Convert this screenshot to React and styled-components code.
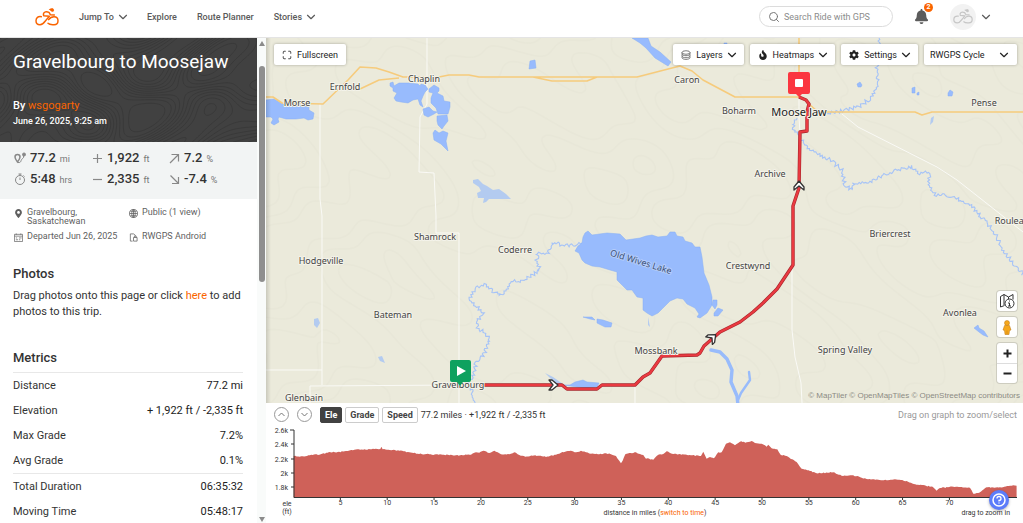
import React, { useState } from "react";
import styled, { createGlobalStyle } from "styled-components";
import { FiChevronDown, FiSearch, FiMaximize } from "react-icons/fi";
import { FaBell, FaFire, FaCog, FaMapMarkerAlt } from "react-icons/fa";

const GlobalStyle = createGlobalStyle`
  * {
    box-sizing: border-box;
  }
  body {
    margin: 0;
    font-family: Roboto, "Liberation Sans", sans-serif;
    color: #333;
    background: #fff;
  }
  button, input, select {
    font-family: inherit;
  }
  a {
    text-decoration: none;
  }
`;

const Page = styled.div`
  display: flex;
  flex-direction: column;
  height: 100vh;
  overflow: hidden;
`;

const Header = styled.header`
  display: flex;
  align-items: center;
  justify-content: space-between;
  flex: none;
  height: 38px;
  padding: 0 33px 4px 35px;
  border-bottom: 1px solid #e4e4e4;
`;

const Nav = styled.nav`
  display: flex;
  align-items: center;
  gap: 20px;
`;

const NavLink = styled.a`
  display: flex;
  align-items: center;
  gap: 5px;
  font-size: 9px;
  font-weight: 500;
  color: #5a5a5a;
`;

const Chevron = styled(FiChevronDown).attrs({ size: 14 })`
  flex: none;
  margin: 0 -3px;
`;

const HeaderTools = styled.div`
  display: flex;
  align-items: center;
`;

const SearchBox = styled.label`
  display: flex;
  align-items: center;
  gap: 4px;
  width: 134px;
  height: 21px;
  padding: 0 8px;
  border: 1px solid #dcdcdc;
  border-radius: 11px;
  color: #777;
`;

const SearchInput = styled.input`
  min-width: 0;
  flex: 1;
  padding: 0;
  border: none;
  outline: none;
  background: none;
  font-size: 9px;
  color: #333;
  &::placeholder {
    color: #8c8c8c;
    opacity: 1;
  }
`;

const BellButton = styled.button`
  position: relative;
  display: flex;
  margin-left: 21px;
  padding: 0;
  border: none;
  background: none;
  color: #5c5c5c;
`;

const Badge = styled.span`
  position: absolute;
  top: -6px;
  right: -4px;
  width: 9px;
  height: 9px;
  border-radius: 50%;
  background: #fa6400;
  color: #fff;
  font-size: 7px;
  font-weight: 700;
  line-height: 9px;
  text-align: center;
`;

const AvatarButton = styled.button`
  display: flex;
  align-items: center;
  gap: 6px;
  margin-left: 21px;
  padding: 0;
  border: none;
  background: none;
  color: #5a5a5a;
`;

const Avatar = styled.span`
  display: flex;
  align-items: center;
  justify-content: center;
  width: 26px;
  height: 26px;
  border-radius: 50%;
  background: #f2f2f2;
`;

const Body = styled.div`
  display: flex;
  flex: 1;
  min-height: 0;
`;

const Sidebar = styled.aside`
  display: flex;
  flex: none;
  width: 266px;
`;

const SidebarContent = styled.div`
  flex: 1;
  min-width: 0;
  overflow: hidden;
`;

const Scrollbar = styled.div`
  display: flex;
  flex-direction: column;
  align-items: center;
  width: 9px;
  padding: 3px 0 1px;
  background: #f9fbfa;
`;

const ScrollArrow = styled.span`
  flex: none;
  border: 3px solid transparent;
  ${(props) =>
    props.$up
      ? "border-top: 0; border-bottom: 5px solid #8b8b8b; margin-bottom: 20px;"
      : "border-bottom: 0; border-top: 5px solid #8b8b8b; margin-top: auto;"}
`;

const ScrollThumb = styled.span`
  width: 6px;
  height: 45%;
  margin-bottom: auto;
  border-radius: 3px;
  background: #8f8f8f;
`;

const Hero = styled.section`
  position: relative;
  height: 104px;
  padding: 12px 13px;
  background: #414141;
  color: #fff;
`;

const Contours = styled.svg`
  position: absolute;
  inset: 0;
  width: 100%;
  height: 100%;
`;

const HeroText = styled.div`
  position: relative;
`;

const Title = styled.h1`
  margin: 0 0 24px;
  font-size: 19px;
  font-weight: 400;
  line-height: 24px;
  white-space: nowrap;
`;

const Byline = styled.p`
  margin: 0;
  font-size: 11px;
  font-weight: 500;
  line-height: 16px;
`;

const RideDate = styled.p`
  margin: 0;
  font-size: 9px;
  font-weight: 500;
  line-height: 14px;
`;

const OrangeLink = styled.a`
  color: #fa6400;
  font-weight: 400;
`;

const Stats = styled.section`
  display: grid;
  grid-template-columns: 78px 77px 1fr;
  row-gap: 3px;
  padding: 7px 13px 11px 14px;
  background: #f2f4f4;
`;

const Stat = styled.div`
  display: flex;
  align-items: center;
  gap: 4px;
  color: #888;
`;

const StatValue = styled.span`
  font-size: 13px;
  font-weight: 500;
  line-height: 18px;
  color: #333;
`;

const StatUnit = styled.small`
  padding-top: 2px;
  font-size: 9px;
  color: #777;
`;

const Facts = styled.section`
  display: grid;
  grid-template-columns: 1fr 1fr;
  row-gap: 6px;
  padding: 9px 13px 0 14px;
`;

const Fact = styled.div`
  display: flex;
  gap: 4px;
  font-size: 9px;
  line-height: 9px;
  color: #5f5f5f;
  white-space: nowrap;
  svg {
    flex: none;
    margin-top: 1px;
  }
`;

const Section = styled.section`
  padding: 24px 14px 0 13px;
`;

const SectionTitle = styled.h2`
  margin: 0 0 6px;
  font-size: 13px;
  font-weight: 500;
  line-height: 16px;
`;

const Paragraph = styled.p`
  margin: 0 0 6px;
  font-size: 11px;
  line-height: 16px;
`;

const MetricsTable = styled.table`
  width: 100%;
  border-collapse: collapse;
  font-size: 11px;
  line-height: 25px;
  tbody {
    border-top: 1px solid #e8e8e8;
  }
  th {
    padding: 0;
    font-weight: 400;
    text-align: left;
  }
  td {
    padding: 0;
    color: #222;
    text-align: right;
  }
`;

const Main = styled.main`
  display: flex;
  flex: 1;
  flex-direction: column;
  min-width: 0;
`;

const MapArea = styled.section`
  position: relative;
  flex: 1;
  min-height: 0;
  background: #ebeadb;
  overflow: hidden;
`;

const MapCanvas = styled.svg`
  display: block;
  width: 100%;
  height: 100%;
`;

const MapLabel = styled.text`
  font-family: "Noto Sans", sans-serif;
  font-size: ${(props) => (props.$city ? 11 : 9)}px;
  fill: ${(props) => (props.$city ? "#222" : "#444")};
  stroke: #f4f3ea;
  stroke-width: 2px;
  stroke-linejoin: round;
  paint-order: stroke;
  text-anchor: middle;
`;

const LakeLabel = styled(MapLabel)`
  fill: #3d5275;
  stroke: #b5cdfb;
`;

const MapToolbar = styled.div`
  position: absolute;
  top: 6px;
  left: 8px;
  right: 6px;
  display: flex;
  justify-content: space-between;
`;

const ToolGroup = styled.div`
  display: flex;
  gap: 6px;
`;

const ToolButton = styled.button`
  display: flex;
  align-items: center;
  gap: 5px;
  height: 21px;
  padding: 0 8px;
  border: none;
  border-radius: 2px;
  background: #fff;
  box-shadow: 0 0 3px rgba(0, 0, 0, 0.3);
  color: #222;
  font-size: 9px;
`;

const StyleSelect = styled.label`
  display: flex;
  align-items: center;
  height: 21px;
  padding: 0 9px 0 6px;
  border-radius: 2px;
  background: #fff;
  box-shadow: 0 0 3px rgba(0, 0, 0, 0.3);
  color: #222;
  select {
    width: 70px;
    padding: 0;
    border: none;
    appearance: none;
    background: none;
    color: inherit;
    font-size: 9px;
  }
`;

const MapControls = styled.div`
  position: absolute;
  right: 6px;
  bottom: 20px;
  display: flex;
  flex-direction: column;
  gap: 6px;
`;

const ControlBox = styled.div`
  border-radius: 3px;
  background: #fff;
  box-shadow: 0 0 0 1px rgba(0, 0, 0, 0.12);
`;

const ControlButton = styled.button`
  display: flex;
  align-items: center;
  justify-content: center;
  width: 20px;
  height: 20px;
  padding: 0;
  border: none;
  background: none;
  color: #222;
  & + & {
    border-top: 1px solid #ddd;
  }
`;

const Attribution = styled.div`
  position: absolute;
  right: 3px;
  bottom: 1px;
  font-family: "Liberation Sans", sans-serif;
  font-size: 8px;
  line-height: 12px;
  color: #8b8b84;
`;

const Elevation = styled.section`
  flex: none;
`;

const ElevationBar = styled.div`
  display: flex;
  align-items: center;
  gap: 8px;
  height: 23px;
  padding: 0 6px 0 8px;
  font-size: 9px;
`;

const RoundButton = styled.button`
  display: flex;
  align-items: center;
  justify-content: center;
  width: 15px;
  height: 15px;
  padding: 0;
  border: 1px solid #999;
  border-radius: 50%;
  background: #fff;
  color: #777;
`;

const Tabs = styled.div`
  display: flex;
  gap: 3px;
`;

const TabButton = styled.button`
  height: 16px;
  padding: 0 4px;
  border: 1px solid ${(props) => (props.$active ? "#414141" : "#ccc")};
  border-radius: 2px;
  background: ${(props) => (props.$active ? "#414141" : "#fff")};
  color: ${(props) => (props.$active ? "#fff" : "#444")};
  font-size: 9px;
  font-weight: 700;
`;

const Summary = styled.span`
  margin-left: -5px;
`;

const Hint = styled.span`
  margin-left: auto;
  color: #999;
`;

const Chart = styled.svg`
  display: block;
  width: 100%;
  text {
    font-family: Roboto, sans-serif;
    font-size: 7px;
    fill: #333;
  }
  tspan {
    fill: #fa6400;
  }
`;

const HelpButton = styled.button`
  position: fixed;
  right: 14px;
  bottom: 13px;
  display: flex;
  padding: 0;
  border: none;
  border-radius: 50%;
  background: #5c7cfa;
  box-shadow: 0 1px 3px rgba(0, 0, 0, 0.3);
`;

const places = [
  ["Ernfold", 345, 90],
  ["Chaplin", 424, 82],
  ["Morse", 297, 106],
  ["Caron", 687, 83],
  ["Boharm", 739, 114],
  ["Pense", 984, 106],
  ["Archive", 770, 177],
  ["Shamrock", 435, 240],
  ["Hodgeville", 321, 264],
  ["Coderre", 515, 253],
  ["Crestwynd", 748, 269],
  ["Briercrest", 890, 237],
  ["Rouleau", 1012, 224],
  ["Avonlea", 960, 316],
  ["Spring Valley", 845, 353],
  ["Mossbank", 656, 354],
  ["Bateman", 393, 318],
  ["Gravelbourg", 458, 388],
  ["Glenbain", 304, 401],
];

const lakes = [
  "266 100 274 99 281 103 286 105 309 105 309 110 314 113 313 119 308 120 304 118 296 119 286 119 279 117 278 119 279 122 274 125 271 123 273 119 271 117 266 117",
  "390 83 393 82 394 86 399 83 409 83 418 84 420 86 421 84 425 85 428 89 425 92 423 96 421 101 423 107 420 105 418 99 413 100 408 103 401 102 396 101 394 98 397 93 393 91 393 88 390 86",
  "429 89 434 85 439 88 439 91 437 93 443 96 444 101 450 102 450 107 448 114 438 114 436 108 431 103 431 98 433 93 429 92",
  "423 109 429 107 433 111 437 112 434 114 428 117 424 115",
  "437 116 447 115 448 121 444 126 442 129 438 125 437 121",
  "433 133 435 130 439 133 443 131 448 133 446 141 448 151 441 144 434 140",
  "583 237 585 233 588 231 592 235 607 233 620 234 626 240 633 239 640 238 646 236 652 235 658 237 667 236 670 232 675 232 677 236 683 237 685 241 692 243 695 247 700 247 702 257 704 273 709 285 712 297 712 305 707 313 700 318 697 317 699 314 695 308 687 304 683 299 677 298 670 301 663 308 658 313 652 316 647 313 643 310 643 298 637 297 632 290 627 290 622 285 617 280 617 272 610 270 600 267 592 266 585 263 582 260 579 253 575 251 578 246 582 243",
  "712 305 713 300 717 300 717 305 715 309",
  "714 313 718 308 723 310 718 316 714 316",
  "583 317 592 317 595 320 590 319",
  "597 319 603 320 612 323 611 327 605 327 597 323",
  "563 385 570 385 575 382 583 380 587 382 599 383 597 387 587 388 577 387",
  "974 328 978 325 979 328 984 331 988 337 983 335 979 332",
  "857 84 860 82 862 85 861 87 858 87",
  "912 88 915 87 915 93 912 93",
  "948 93 950 90 953 92 952 96 948 96",
  "530 61 535 60 536 68 529 69",
  "632 38 648 38 651 46 660 52 671 62 668 66 655 58 646 48 640 43",
  "724 43 727 43 727 46 724 46",
  "917 93 919 92 919 95 917 95",
];

const paleLakes = [
  "473 180 478 179 483 184 487 186 493 190 499 189 506 194 511 199 504 199 496 199 489 199 486 202 483 203 484 198 478 198 477 193 481 191 479 187 473 183",
  "314 319 318 318 320 323 317 328 314 325",
  "378 357 382 356 385 363 380 361",
  "931 118 934 116 933 122 930 125",
  "545 373 553 377 563 384 558 385 551 379",
  "648 317 649 322 650 327 648 325",
];

const rivers = [
  [[582, 243], [563, 246], [552, 242], [548, 253], [537, 253], [537, 260], [540, 270], [520, 282], [513, 281], [506, 291], [500, 296], [493, 291], [486, 285], [476, 287], [469, 299], [478, 308], [483, 314], [476, 323], [478, 329], [486, 333], [490, 341], [483, 356], [476, 363], [474, 373], [466, 386], [473, 391], [474, 403]],
  [[879, 38], [879, 55], [876, 68], [878, 83], [872, 97], [860, 106], [847, 110], [827, 113]],
  [[797, 118], [793, 123], [795, 132], [810, 150], [830, 160], [842, 170], [845, 185], [852, 190], [853, 183], [870, 182], [887, 173], [912, 167], [918, 173], [930, 172], [928, 183], [935, 195], [953, 196], [972, 207], [987, 223], [997, 237], [1002, 248], [1013, 263], [1023, 274]],
];

const highways =
  "M266 97L273 97L282 103L323 104L348 80L360 67L376 68L389 72L403 77L439 77L449 75L469 75L479 77H637L672 68L680 66L692 71L703 80L735 97L799 97M360 89L379 80L399 78M533 77L552 81L587 81L597 77M799 38V97M809 104L818 112L915 112L922 115L932 112H1023";

const roads =
  "M427 38V104L420 117L419 172L434 173L436 216V233H459V403M320 104V199L322 216V385M266 370H322M310 403V386L459 385M635 385V403M792 265V330L795 357L801 383L802 403M842 114L858 127L937 167L957 180L1023 232M799 97V118L800 132";

const route =
  "M481 385L562 385L567 389L597 389L602 385L635 385L643 377L650 373L662 356L697 355L700 353L704 346L720 332L740 322L753 312L763 303L777 289L793 265L793 206L799 188L800 132L807 131L807 112L809 104L806 100L799 97";

const noise = (n) => {
  const s = Math.sin(n * 127.1) * 43758.5453;
  return s - Math.floor(s) - 0.5;
};

// turns a rough course into a meandering line
function meander(points) {
  let d = `M${points[0].join(" ")}`;
  for (let i = 1; i < points.length; i++) {
    const [x0, y0] = points[i - 1];
    const [x1, y1] = points[i];
    const length = Math.hypot(x1 - x0, y1 - y0);
    const steps = Math.max(2, Math.round(length / 1.5));
    for (let s = 1; s <= steps; s++) {
      const t = s / steps;
      const off = noise(i * 31 + s) * 4;
      const x = x0 + (x1 - x0) * t - ((y1 - y0) / length) * off;
      const y = y0 + (y1 - y0) * t + ((x1 - x0) / length) * off;
      d += `L${x.toFixed(1)} ${y.toFixed(1)}`;
    }
  }
  return d;
}

// contour lines of a smooth height field (marching squares)
function contours(width, height, step, levels, field) {
  let d = "";
  for (let y = 0; y < height; y += step) {
    for (let x = 0; x < width; x += step) {
      const corners = [
        [x, y],
        [x + step, y],
        [x + step, y + step],
        [x, y + step],
      ];
      const values = corners.map(([cx, cy]) => field(cx, cy));
      levels.forEach((level) => {
        const hits = [];
        for (let k = 0; k < 4; k++) {
          const n = (k + 1) % 4;
          if (values[k] > level !== values[n] > level) {
            const t = (level - values[k]) / (values[n] - values[k]);
            hits.push([
              corners[k][0] + (corners[n][0] - corners[k][0]) * t,
              corners[k][1] + (corners[n][1] - corners[k][1]) * t,
            ]);
          }
        }
        for (let k = 0; k + 1 < hits.length; k += 2) {
          d += `M${hits[k].map((v) => v.toFixed(1)).join(" ")}L${hits[k + 1]
            .map((v) => v.toFixed(1))
            .join(" ")}`;
        }
      });
    }
  }
  return d;
}

const heroContours = contours(
  260,
  104,
  2,
  [-1.8, -1.3, -0.9, -0.5, -0.1, 0.3, 0.7, 1.1, 1.5, 1.9],
  (x, y) =>
    Math.sin(x / 23 + Math.sin(y / 17) * 1.6) +
    Math.cos(y / 15 + Math.sin(x / 31) * 2) +
    0.5 * Math.sin((x + y) / 13)
);

const terrain = contours(
  757,
  365,
  4,
  [-1.2, 0, 1.1],
  (x, y) =>
    Math.sin(x / 47 + Math.sin(y / 29) * 2) +
    Math.cos(y / 38 + Math.sin(x / 61) * 2.4) +
    0.4 * Math.sin((x - y) / 11)
);

// elevation profile, three units per pixel of the plot
const profile = [
  [83, 168], [110, 169], [140, 165], [160, 164], [185, 158], [215, 156],
  [240, 153], [265, 149], [300, 149], [325, 147], [343, 147], [346, 140],
  [350, 148], [380, 150], [400, 152], [430, 157], [455, 161], [490, 163],
  [530, 164], [570, 166], [615, 164], [625, 158], [640, 158], [652, 152],
  [670, 159], [685, 152], [695, 157], [705, 163], [730, 163], [745, 157],
  [760, 165], [778, 170], [800, 167], [820, 167], [840, 171], [870, 164],
  [885, 158], [910, 153], [930, 157], [945, 152], [960, 157], [975, 161],
  [1000, 163], [1020, 160], [1035, 163], [1050, 168], [1060, 182], [1065, 190],
  [1070, 182], [1078, 163], [1090, 159], [1110, 157], [1122, 162], [1132, 165],
  [1140, 176], [1162, 179], [1177, 164], [1192, 162], [1202, 154], [1222, 162],
  [1262, 164], [1305, 168], [1312, 155], [1322, 176], [1332, 171], [1344, 175],
  [1357, 157], [1367, 157], [1380, 131], [1392, 127], [1407, 136], [1422, 125],
  [1442, 127], [1457, 123], [1472, 130], [1487, 131], [1502, 140], [1507, 134],
  [1517, 145], [1534, 148], [1544, 164], [1562, 168], [1592, 186], [1607, 206],
  [1632, 213], [1652, 220], [1702, 217], [1727, 227], [1762, 226], [1787, 233],
  [1802, 237], [1837, 239], [1862, 241], [1887, 238], [1922, 243], [1952, 254],
  [2000, 260], [2012, 272], [2022, 264], [2062, 260], [2112, 263], [2122, 281],
  [2137, 279], [2162, 262], [2202, 262], [2237, 257], [2252, 257],
];

function profilePath() {
  let d = "M83 293";
  profile.forEach(([x, y], i) => {
    d += `L${x} ${y}`;
    const next = profile[i + 1];
    if (!next) return;
    const steps = Math.floor((next[0] - x) / 4);
    for (let s = 1; s < steps; s++) {
      const t = s / steps;
      const py = y + (next[1] - y) * t + noise(i * 17 + s) * 3;
      d += `L${(x + (next[0] - x) * t).toFixed(1)} ${py.toFixed(1)}`;
    }
  });
  return `${d}L2252 293Z`;
}

const metrics = [
  [
    ["Distance", "77.2 mi"],
    ["Elevation", "+ 1,922 ft / -2,335 ft"],
    ["Max Grade", "7.2%"],
    ["Avg Grade", "0.1%"],
  ],
  [
    ["Total Duration", "06:35:32"],
    ["Moving Time", "05:48:17"],
  ],
];

const Cyclist = ({ color, width }) => (
  <svg
    width={width}
    viewBox="0 0 72 54"
    fill="none"
    stroke={color}
    strokeWidth="4.4"
    strokeLinecap="round"
    strokeLinejoin="round"
  >
    <path d="M19 26C9 24 3 30 3 38C3 45 8 50 15 50C22 50 26 46 31 39L43 25L26 23C23 14 31 8 42 13L46 20L58 21" />
    <path d="M39 46C44 51 50 50 57 50C64 50 69 45 69 38C69 31 64 26 57 26C50 26 45 29 41 35" />
    <path d="M44 4C48 1 53 1 55 3L56 9C53 12 47 10 44 4Z" fill={color} strokeWidth="2" />
  </svg>
);

const DirectionArrow = ({ x, y, angle }) => (
  <path
    d="M-4 -5L-1 -5L5 0L-1 5L-4 5L0 0Z"
    transform={`translate(${x} ${y}) rotate(${angle})`}
    fill="#fff"
    stroke="#333"
    strokeWidth="1.3"
    strokeLinejoin="round"
  />
);

const RideMap = () => (
  <MapCanvas viewBox="266 38 757 365" preserveAspectRatio="xMidYMid slice">
    <defs>
      <linearGradient id="edge">
        <stop offset="0" stopColor="#000" stopOpacity="0.14" />
        <stop offset="1" stopColor="#000" stopOpacity="0" />
      </linearGradient>
    </defs>
    <rect x="266" y="38" width="757" height="365" fill="#ebeadb" />
    <path
      d={terrain}
      transform="translate(266 38)"
      stroke="#e8e7d8"
      strokeWidth="1.6"
      fill="none"
    />
    <path d={roads} fill="none" stroke="#fafaf6" strokeWidth="1" />
    <g fill="none" stroke="#a6c3f7" strokeWidth="1.1">
      {rivers.map((river, i) => (
        <path key={i} d={meander(river)} />
      ))}
    </g>
    <g fill="none" stroke="#98bbfb" strokeLinecap="round" strokeLinejoin="round">
      <path d="M711 350L720 352L727 359L732 370L731 382L737 396L738 405" strokeWidth="3.4" />
      <path d="M749 372L750 380L741 393L738 400" strokeWidth="2.4" />
    </g>
    <g fill="#b3cbf0">
      {paleLakes.map((points) => (
        <polygon key={points} points={points} />
      ))}
    </g>
    <g fill="#98bbfd" stroke="#86aef5" strokeWidth="0.5">
      {lakes.map((points) => (
        <polygon key={points} points={points} />
      ))}
    </g>
    <path d={highways} fill="none" stroke="#f6cb7c" strokeWidth="1.6" strokeLinejoin="round" />
    <rect x="266" y="38" width="5" height="365" fill="url(#edge)" />
    <path d={route} fill="none" stroke="#a8262c" strokeWidth="3.4" strokeLinejoin="round" />
    <path d={route} fill="none" stroke="#ea3a41" strokeWidth="2.2" strokeLinejoin="round" />
    {places.map(([name, x, y]) => (
      <MapLabel key={name} x={x} y={y}>
        {name}
      </MapLabel>
    ))}
    <LakeLabel x="641" y="265" transform="rotate(17 641 262)">
      Old Wives Lake
    </LakeLabel>
    <MapLabel $city x="799" y="116">
      Moose Jaw
    </MapLabel>
    <DirectionArrow x={553} y={385} angle={0} />
    <DirectionArrow x={712} y={338} angle={-42} />
    <DirectionArrow x={799} y={186} angle={-90} />
    <path d="M452 360H469A2 2 0 0 1 471 362V380A2 2 0 0 1 469 382H463L460 386L457 382H452A2 2 0 0 1 450 380V362A2 2 0 0 1 452 360Z" fill="#0ea15f" />
    <path d="M457 366V376L466 371Z" fill="#fff" />
    <path d="M790 72H808A2 2 0 0 1 810 74V92A2 2 0 0 1 808 94H802L799 97L796 94H790A2 2 0 0 1 788 92V74A2 2 0 0 1 790 72Z" fill="#fb3640" />
    <rect x="795" y="79" width="8" height="8" rx="1" fill="#fff" />
  </MapCanvas>
);

const LayersIcon = () => (
  <svg width="10" height="10" viewBox="0 0 20 20" fill="none" stroke="#444" strokeWidth="1.4">
    <ellipse cx="10" cy="5" rx="8" ry="3.5" />
    <path d="M2 5V8C2 12.5 18 12.5 18 8V5M2 9V12C2 16.5 18 16.5 18 12V9M2 13V15C2 20 18 20 18 15V13" />
  </svg>
);

const PegmanIcon = () => (
  <svg width="10" height="15" viewBox="0 0 20 30" fill="#f6a81c" stroke="#bd7410" strokeWidth="1">
    <path d="M5 11H15L18 20L15 21L14 29H6L5 21L2 20Z" />
    <circle cx="10" cy="6" r="5" />
    <path d="M10 21V29" />
  </svg>
);

const MapInfoIcon = () => (
  <svg width="16" height="16" viewBox="0 0 32 32" fill="none" stroke="#333" strokeWidth="2">
    <path d="M11 25L3 28V7L10 3L19 8L28 3V13M10 3V24M19 8V12" />
    <circle cx="21" cy="21" r="9" fill="#fff" />
    <path d="M18 20H21V26M18 26H24M21 15V17" />
  </svg>
);

const RouteIcon = () => (
  <svg width="12" height="12" viewBox="0 0 24 24" fill="none" stroke="#888" strokeWidth="2">
    <path d="M7 20C3 15 2 13 2 10A5 5 0 0 1 12 10C12 13 11 15 7 20Z" strokeWidth="3" />
    <path d="M8 21C15 22 13 17 16 14C18 12 20 12 19 8" />
    <circle cx="20" cy="5" r="3" fill="#888" />
  </svg>
);

const TimerIcon = () => (
  <svg width="12" height="12" viewBox="0 0 24 24" fill="none" stroke="#888" strokeWidth="2">
    <circle cx="12" cy="14" r="9" />
    <path d="M9 2H15M12 2V5M12 9V14M19 5L21 7" />
  </svg>
);

const StatIcon = ({ d }) => (
  <svg width="11" height="11" viewBox="0 0 22 22" fill="none" stroke="#888" strokeWidth="2.4">
    <path d={d} />
  </svg>
);

const SymbolIcon = ({ d }) => (
  <svg width="11" height="11" viewBox="0 0 22 22" fill="none" stroke="#222" strokeWidth="4">
    <path d={d} />
  </svg>
);

const CircleChevron = ({ d }) => (
  <svg width="7" height="7" viewBox="0 0 14 14" fill="none" stroke="#777" strokeWidth="2">
    <path d={d} />
  </svg>
);

const GlobeIcon = () => (
  <svg width="9" height="9" viewBox="0 0 20 20" fill="none" stroke="#5f5f5f" strokeWidth="1.7">
    <circle cx="10" cy="10" r="9" />
    <ellipse cx="10" cy="10" rx="4" ry="9" />
    <path d="M1 10H19M3 5H17M3 15H17M10 1V19" />
  </svg>
);

const CalendarIcon = () => (
  <svg width="9" height="9" viewBox="0 0 20 20" fill="none" stroke="#6b6b6b" strokeWidth="1.7">
    <path d="M1 3H19V19H1ZM1 7H19M5 1V4M15 1V4M4 15H9M11 11H17M4 11H7M11 15H14" />
  </svg>
);

const DeviceIcon = () => (
  <svg width="9" height="9" viewBox="0 0 20 20" fill="none" stroke="#6b6b6b" strokeWidth="1.8">
    <path d="M8 18H3V2H10L14 5V7M10 10H18V18H10ZM12 10V7H16V10" />
  </svg>
);

const ElevationChart = () => (
  <Chart viewBox="0 0 757 97">
    <g transform="translate(0 -26) scale(0.3333)">
      <path d={profilePath()} fill="#cf6159" />
    </g>
    <path
      d="M24 4H28V71.5H751M25 18H28M25 33H28M25 47H28M25 61H28"
      fill="none"
      stroke="#333"
      strokeWidth="1"
    />
    {["2.6k", "2.4k", "2.2k", "2k", "1.8k"].map((label, i) => (
      <text key={label} x="22" y={7 + Math.round(i * 14.3)} textAnchor="end">
        {label}
      </text>
    ))}
    {[5, 10, 15, 20, 25, 30, 35, 40, 45, 50, 55, 60, 65, 70].map((mile) => (
      <g key={mile} transform={`translate(${27.5 + mile * 9.37} 0)`}>
        <path d="M0 71V74" stroke="#333" />
        <text y="79" textAnchor="middle">
          {mile}
        </text>
      </g>
    ))}
    <text x="21" y="80" textAnchor="middle">ele</text>
    <text x="21" y="88" textAnchor="middle">(ft)</text>
    <text x="389" y="89" textAnchor="middle">
      distance in miles (<a href="#time"><tspan>switch to time</tspan></a>)
    </text>
    <text x="744" y="89" textAnchor="end">drag to zoom in</text>
  </Chart>
);

export default function App() {
  const [graph, setGraph] = useState("Ele");

  return (
    <Page>
      <GlobalStyle />
      <Header>
        <Nav>
          <NavLink href="#home" aria-label="Home">
            <Cyclist color="#fa6400" width="24" />
          </NavLink>
          <NavLink href="#jump">
            Jump To <Chevron />
          </NavLink>
          <NavLink href="#explore">Explore</NavLink>
          <NavLink href="#planner">Route Planner</NavLink>
          <NavLink href="#stories">
            Stories <Chevron />
          </NavLink>
        </Nav>
        <HeaderTools>
          <SearchBox>
            <FiSearch size={12} />
            <SearchInput type="search" placeholder="Search Ride with GPS" />
          </SearchBox>
          <BellButton aria-label="Notifications">
            <FaBell size={15} />
            <Badge>2</Badge>
          </BellButton>
          <AvatarButton aria-label="Account">
            <Avatar>
              <Cyclist color="#c6c6c6" width="20" />
            </Avatar>
            <Chevron />
          </AvatarButton>
        </HeaderTools>
      </Header>
      <Body>
        <Sidebar>
          <SidebarContent>
            <Hero>
              <Contours viewBox="0 0 257 104" preserveAspectRatio="xMidYMid slice">
                <path d={heroContours} stroke="#373737" strokeWidth="0.8" fill="none" />
              </Contours>
              <HeroText>
                <Title>Gravelbourg to Moosejaw</Title>
                <Byline>
                  By <OrangeLink href="#user">wsgogarty</OrangeLink>
                </Byline>
                <RideDate>June 26, 2025, 9:25 am</RideDate>
              </HeroText>
            </Hero>
            <Stats>
              <Stat>
                <RouteIcon />
                <StatValue>77.2</StatValue>
                <StatUnit>mi</StatUnit>
              </Stat>
              <Stat>
                <StatIcon d="M11 2V20M2 11H20" />
                <StatValue>1,922</StatValue>
                <StatUnit>ft</StatUnit>
              </Stat>
              <Stat>
                <StatIcon d="M2 20L19 3M5 3H19V17" />
                <StatValue>7.2</StatValue>
                <StatUnit>%</StatUnit>
              </Stat>
              <Stat>
                <TimerIcon />
                <StatValue>5:48</StatValue>
                <StatUnit>hrs</StatUnit>
              </Stat>
              <Stat>
                <StatIcon d="M2 11H20" />
                <StatValue>2,335</StatValue>
                <StatUnit>ft</StatUnit>
              </Stat>
              <Stat>
                <StatIcon d="M3 3L19 19M6 19H19V6" />
                <StatValue>-7.4</StatValue>
                <StatUnit>%</StatUnit>
              </Stat>
            </Stats>
            <Facts>
              <Fact>
                <FaMapMarkerAlt size={9} />
                <span>
                  Gravelbourg,
                  <br />
                  Saskatchewan
                </span>
              </Fact>
              <Fact>
                <GlobeIcon />
                Public (1 view)
              </Fact>
              <Fact>
                <CalendarIcon />
                Departed Jun 26, 2025
              </Fact>
              <Fact>
                <DeviceIcon />
                RWGPS Android
              </Fact>
            </Facts>
            <Section>
              <SectionTitle>Photos</SectionTitle>
              <Paragraph>
                Drag photos onto this page or click{" "}
                <OrangeLink href="#upload">here</OrangeLink> to add photos to this trip.
              </Paragraph>
            </Section>
            <Section>
              <SectionTitle>Metrics</SectionTitle>
              <MetricsTable>
                {metrics.map((group) => (
                  <tbody key={group[0][0]}>
                    {group.map(([label, value]) => (
                      <tr key={label}>
                        <th scope="row">{label}</th>
                        <td>{value}</td>
                      </tr>
                    ))}
                  </tbody>
                ))}
              </MetricsTable>
            </Section>
          </SidebarContent>
          <Scrollbar>
            <ScrollArrow $up />
            <ScrollThumb />
            <ScrollArrow />
          </Scrollbar>
        </Sidebar>
        <Main>
          <MapArea>
            <RideMap />
            <MapToolbar>
              <ToolButton>
                <FiMaximize size={10} /> Fullscreen
              </ToolButton>
              <ToolGroup>
                <ToolButton>
                  <LayersIcon /> Layers <Chevron />
                </ToolButton>
                <ToolButton>
                  <FaFire size={10} /> Heatmaps <Chevron />
                </ToolButton>
                <ToolButton>
                  <FaCog size={10} /> Settings <Chevron />
                </ToolButton>
                <StyleSelect>
                  <select aria-label="Map style" defaultValue="RWGPS Cycle">
                    <option>RWGPS Cycle</option>
                  </select>
                  <Chevron />
                </StyleSelect>
              </ToolGroup>
            </MapToolbar>
            <MapControls>
              <ControlBox>
                <ControlButton aria-label="Map legend">
                  <MapInfoIcon />
                </ControlButton>
              </ControlBox>
              <ControlBox>
                <ControlButton aria-label="Street view">
                  <PegmanIcon />
                </ControlButton>
              </ControlBox>
              <ControlBox>
                <ControlButton aria-label="Zoom in">
                  <SymbolIcon d="M11 3V19M3 11H19" />
                </ControlButton>
                <ControlButton aria-label="Zoom out">
                  <SymbolIcon d="M3 11H19" />
                </ControlButton>
              </ControlBox>
            </MapControls>
            <Attribution>© MapTiler © OpenMapTiles © OpenStreetMap contributors</Attribution>
          </MapArea>
          <Elevation>
            <ElevationBar>
              <RoundButton aria-label="Expand graph">
                <CircleChevron d="M1 10L7 4L13 10" />
              </RoundButton>
              <RoundButton aria-label="Collapse graph">
                <CircleChevron d="M1 4L7 10L13 4" />
              </RoundButton>
              <Tabs>
                {["Ele", "Grade", "Speed"].map((name) => (
                  <TabButton
                    key={name}
                    $active={graph === name}
                    onClick={() => setGraph(name)}
                  >
                    {name}
                  </TabButton>
                ))}
              </Tabs>
              <Summary>77.2 miles · +1,922 ft / -2,335 ft</Summary>
              <Hint>Drag on graph to zoom/select</Hint>
            </ElevationBar>
            <ElevationChart />
          </Elevation>
        </Main>
      </Body>
      <HelpButton aria-label="Help">
        <svg width="20" height="20" viewBox="0 0 20 20" fill="none" stroke="#fff" strokeWidth="1.5">
          <circle cx="10" cy="10" r="6" />
          <path d="M8 8.5A2 2 0 1 1 10 10.5V11.5M10 12.5V13.5" strokeWidth="1.3" />
        </svg>
      </HelpButton>
    </Page>
  );
}
